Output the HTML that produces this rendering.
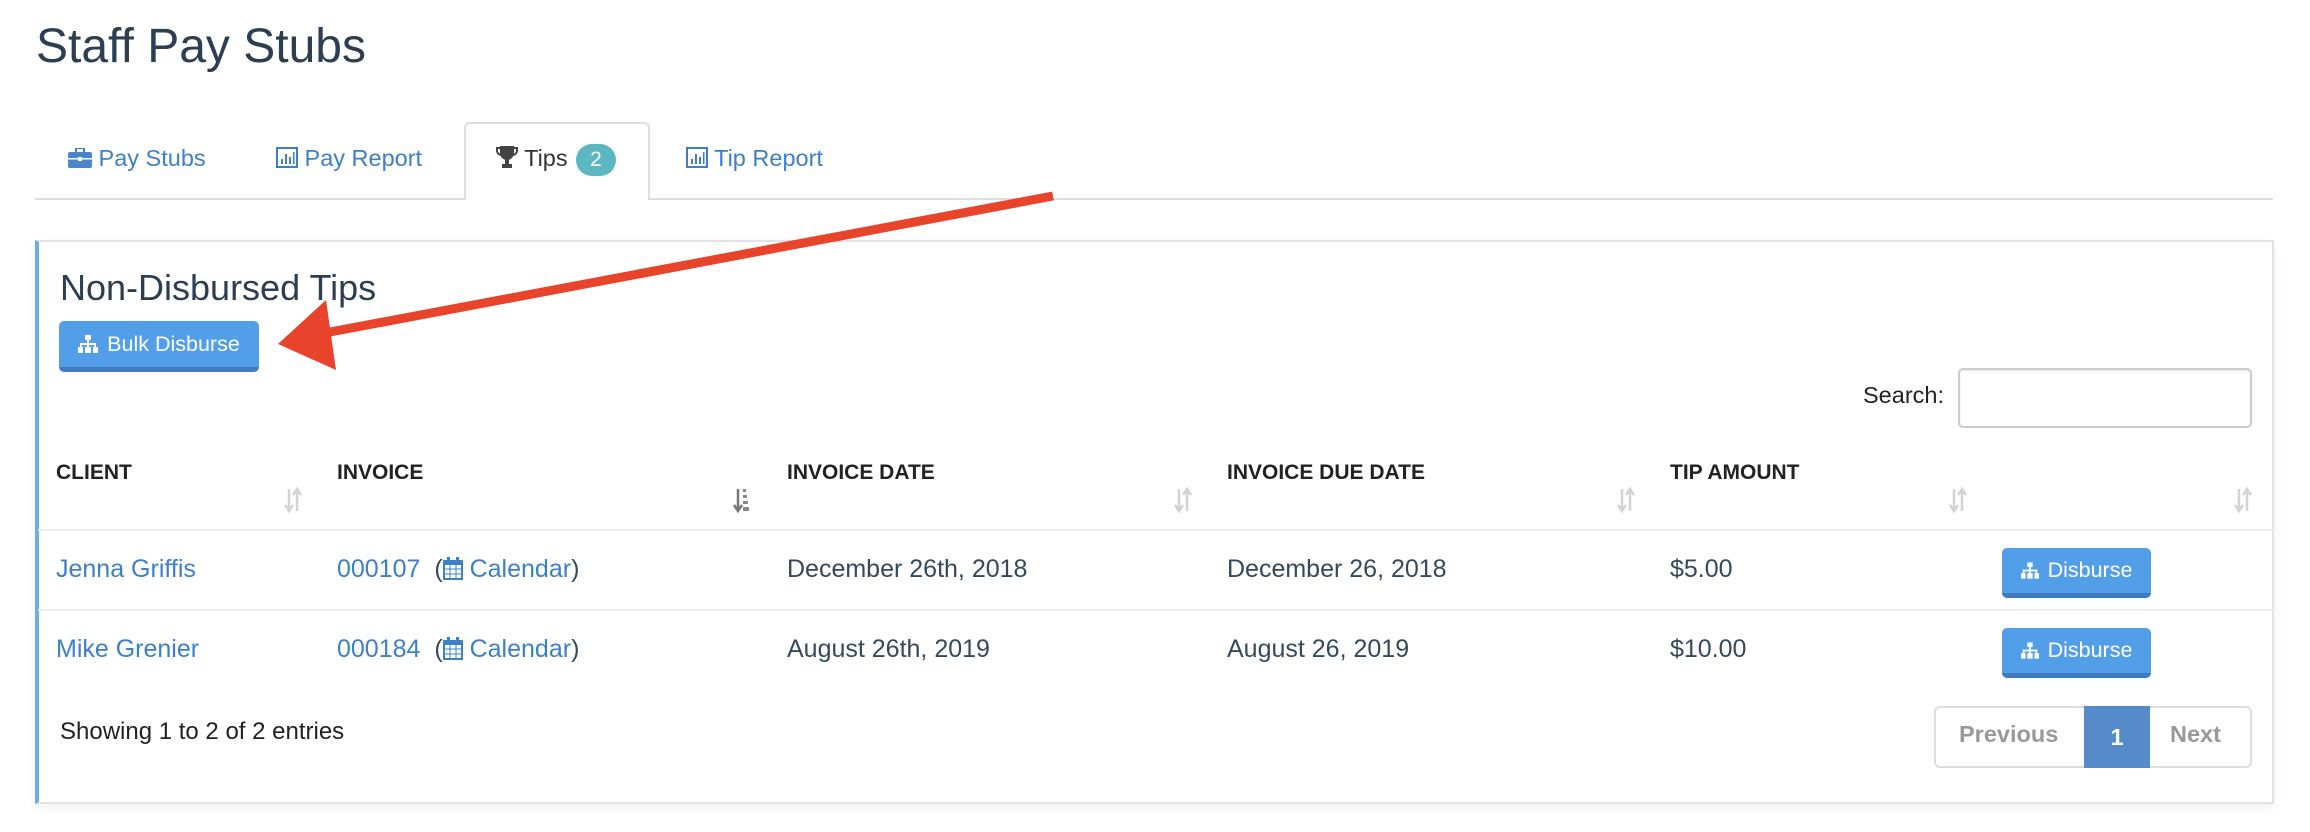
<!DOCTYPE html>
<html><head><meta charset="utf-8"><style>
*{box-sizing:border-box;margin:0;padding:0}
body{width:2310px;height:832px;background:#fff;font-family:"Liberation Sans",Arial,sans-serif;color:#34495e;position:relative;overflow:hidden}
.a{position:absolute;white-space:nowrap}
.link{color:#3d80c6}
.btn{position:absolute;background:#539ee8;border-radius:5px;border-bottom:5px solid #3f7bbd;color:#fff;font-size:21.5px;display:flex;align-items:center;justify-content:center;gap:9px}
.th{font-weight:bold;font-size:21px;color:#222;top:461px}
.td{font-size:25px;top:555px}
.td2{top:635px}
.sort{position:absolute;top:487px;width:18px;height:26px}
.line{position:absolute;left:38px;width:2235px;height:2px;background:#eef1f4}
</style></head><body>
<div class="a" style="left:36px;top:19px;font-size:48px;color:#2c3e50">Staff Pay Stubs</div>

<!-- tabs -->
<div class="a" style="left:35px;top:198px;width:2238px;height:2px;background:#ddd"></div>
<div class="a" style="left:464px;top:122px;width:186px;height:78px;border:2px solid #ddd;border-bottom:none;border-radius:6px 6px 0 0;background:#fff"></div>
<div class="a link" style="left:68px;top:145px;font-size:23.5px">
<svg width="24" height="20" viewBox="0 0 24 20" style="vertical-align:-2px"><rect x="8" y="0" width="8" height="5" rx="1" fill="none" stroke="#3d80c6" stroke-width="2"/><rect x="0" y="4" width="24" height="16" rx="2" fill="#4a86c8"/><rect x="0" y="10" width="24" height="1.5" fill="#fff"/><rect x="10" y="9" width="4" height="4" fill="#fff"/></svg> Pay Stubs</div>
<div class="a link" style="left:276px;top:145px;font-size:23.5px">
<svg width="22" height="21" viewBox="0 0 22 21" style="vertical-align:-2px"><rect x="1" y="1" width="20" height="19" fill="none" stroke="#3d80c6" stroke-width="2"/><rect x="5" y="12" width="2" height="5" fill="#3d80c6"/><rect x="9" y="7" width="2" height="10" fill="#3d80c6"/><rect x="13" y="10" width="2" height="7" fill="#3d80c6"/><rect x="17" y="5" width="1.5" height="12" fill="#3d80c6"/></svg> Pay Report</div>
<div class="a" style="left:496px;top:145px;font-size:23.5px;color:#333">
<svg width="22" height="24" viewBox="0 0 22 24" style="vertical-align:-3px"><path d="M4 1h14v7a7 7 0 0 1-14 0z" fill="#444"/><path d="M4 3H1v3a5 5 0 0 0 4 4M18 3h3v3a5 5 0 0 1-4 4" fill="none" stroke="#444" stroke-width="2"/><rect x="9" y="14" width="4" height="5" fill="#444"/><rect x="6" y="19" width="10" height="4" fill="#444"/></svg> Tips</div>
<div class="a" style="left:576px;top:144px;width:40px;height:32px;border-radius:16px;background:#5bb8c0;color:#fff;font-size:21px;text-align:center;line-height:32px">2</div>
<div class="a link" style="left:686px;top:145px;font-size:23.5px">
<svg width="22" height="21" viewBox="0 0 22 21" style="vertical-align:-2px"><rect x="1" y="1" width="20" height="19" fill="none" stroke="#3d80c6" stroke-width="2"/><rect x="5" y="12" width="2" height="5" fill="#3d80c6"/><rect x="9" y="7" width="2" height="10" fill="#3d80c6"/><rect x="13" y="10" width="2" height="7" fill="#3d80c6"/><rect x="17" y="5" width="1.5" height="12" fill="#3d80c6"/></svg> Tip Report</div>

<!-- panel -->
<div class="a" style="left:35px;top:240px;width:2239px;height:564px;border:2px solid #e2e2e2;border-left:4px solid #6aaee6;box-shadow:0 4px 10px rgba(0,0,0,.06)"></div>
<div class="a" style="left:60px;top:267px;font-size:36px;color:#2c3e50">Non-Disbursed Tips</div>
<div class="btn" style="left:59px;top:321px;width:200px;height:51px">
<svg width="20" height="18" viewBox="0 0 20 18"><rect x="7" y="0" width="6" height="5" fill="#fff"/><rect x="9" y="5" width="2" height="4" fill="#fff"/><rect x="2" y="8" width="16" height="2" fill="#fff"/><rect x="2" y="8" width="2" height="4" fill="#fff"/><rect x="16" y="8" width="2" height="4" fill="#fff"/><rect x="9" y="8" width="2" height="4" fill="#fff"/><rect x="0" y="12" width="5" height="6" fill="#fff"/><rect x="7" y="12" width="6" height="6" fill="#fff"/><rect x="15" y="12" width="5" height="6" fill="#fff"/></svg>Bulk Disburse</div>

<div class="a" style="left:1863px;top:382px;font-size:23.5px;color:#222">Search:</div>
<div class="a" style="left:1958px;top:368px;width:294px;height:60px;border:2px solid #ccc;border-radius:5px;box-shadow:inset 0 1px 2px rgba(0,0,0,.1)"></div>

<div class="a th" style="left:56px">CLIENT</div>
<div class="a th" style="left:337px">INVOICE</div>
<div class="a th" style="left:787px">INVOICE DATE</div>
<div class="a th" style="left:1227px">INVOICE DUE DATE</div>
<div class="a th" style="left:1670px">TIP AMOUNT</div>

<svg class="sort" style="left:284px" viewBox="0 0 18 26"><path d="M5 2v20M1 18l4 6 4-6M13 24V4M9 8l4-6 4 6" stroke="#d3d3d3" stroke-width="2.5" fill="none"/></svg>
<svg class="sort" style="left:733px" viewBox="0 0 18 26"><path d="M5 2v20M1 18l4 6 4-6" stroke="#777" stroke-width="2.5" fill="none"/><rect x="10" y="2" width="3" height="3" fill="#888"/><rect x="10" y="8" width="4" height="3" fill="#888"/><rect x="10" y="14" width="5" height="3" fill="#888"/><rect x="10" y="20" width="6" height="4" fill="#888"/></svg>
<svg class="sort" style="left:1174px" viewBox="0 0 18 26"><path d="M5 2v20M1 18l4 6 4-6M13 24V4M9 8l4-6 4 6" stroke="#d3d3d3" stroke-width="2.5" fill="none"/></svg>
<svg class="sort" style="left:1617px" viewBox="0 0 18 26"><path d="M5 2v20M1 18l4 6 4-6M13 24V4M9 8l4-6 4 6" stroke="#d3d3d3" stroke-width="2.5" fill="none"/></svg>
<svg class="sort" style="left:1949px" viewBox="0 0 18 26"><path d="M5 2v20M1 18l4 6 4-6M13 24V4M9 8l4-6 4 6" stroke="#d3d3d3" stroke-width="2.5" fill="none"/></svg>
<svg class="sort" style="left:2234px" viewBox="0 0 18 26"><path d="M5 2v20M1 18l4 6 4-6M13 24V4M9 8l4-6 4 6" stroke="#d3d3d3" stroke-width="2.5" fill="none"/></svg>

<div class="line" style="top:529px"></div>
<div class="line" style="top:609px"></div>

<div class="a td link" style="left:56px">Jenna Griffis</div>
<div class="a td" style="left:337px"><span class="link">000107</span>&nbsp; (<span class="link"><svg width="20" height="23" viewBox="0 0 20 23" style="vertical-align:-3px"><rect x="1" y="4" width="18" height="18" fill="none" stroke="#3d80c6" stroke-width="2"/><rect x="1" y="4" width="18" height="4" fill="#3d80c6"/><rect x="4" y="0" width="3" height="6" fill="#3d80c6"/><rect x="13" y="0" width="3" height="6" fill="#3d80c6"/><path d="M1 12h18M1 17h18M7 8v14M13 8v14" stroke="#3d80c6" stroke-width="1"/></svg> Calendar</span>)</div>
<div class="a td" style="left:787px">December 26th, 2018</div>
<div class="a td" style="left:1227px">December 26, 2018</div>
<div class="a td" style="left:1670px">$5.00</div>

<div class="a td td2 link" style="left:56px">Mike Grenier</div>
<div class="a td td2" style="left:337px"><span class="link">000184</span>&nbsp; (<span class="link"><svg width="20" height="23" viewBox="0 0 20 23" style="vertical-align:-3px"><rect x="1" y="4" width="18" height="18" fill="none" stroke="#3d80c6" stroke-width="2"/><rect x="1" y="4" width="18" height="4" fill="#3d80c6"/><rect x="4" y="0" width="3" height="6" fill="#3d80c6"/><rect x="13" y="0" width="3" height="6" fill="#3d80c6"/><path d="M1 12h18M1 17h18M7 8v14M13 8v14" stroke="#3d80c6" stroke-width="1"/></svg> Calendar</span>)</div>
<div class="a td td2" style="left:787px">August 26th, 2019</div>
<div class="a td td2" style="left:1227px">August 26, 2019</div>
<div class="a td td2" style="left:1670px">$10.00</div>

<div class="btn" style="left:2002px;top:548px;width:149px;height:50px"><svg width="18" height="17" viewBox="0 0 20 18"><rect x="7" y="0" width="6" height="5" fill="#fff"/><rect x="9" y="5" width="2" height="4" fill="#fff"/><rect x="2" y="8" width="16" height="2" fill="#fff"/><rect x="2" y="8" width="2" height="4" fill="#fff"/><rect x="16" y="8" width="2" height="4" fill="#fff"/><rect x="9" y="8" width="2" height="4" fill="#fff"/><rect x="0" y="12" width="5" height="6" fill="#fff"/><rect x="7" y="12" width="6" height="6" fill="#fff"/><rect x="15" y="12" width="5" height="6" fill="#fff"/></svg>Disburse</div>
<div class="btn" style="left:2002px;top:628px;width:149px;height:50px"><svg width="18" height="17" viewBox="0 0 20 18"><rect x="7" y="0" width="6" height="5" fill="#fff"/><rect x="9" y="5" width="2" height="4" fill="#fff"/><rect x="2" y="8" width="16" height="2" fill="#fff"/><rect x="2" y="8" width="2" height="4" fill="#fff"/><rect x="16" y="8" width="2" height="4" fill="#fff"/><rect x="9" y="8" width="2" height="4" fill="#fff"/><rect x="0" y="12" width="5" height="6" fill="#fff"/><rect x="7" y="12" width="6" height="6" fill="#fff"/><rect x="15" y="12" width="5" height="6" fill="#fff"/></svg>Disburse</div>

<div class="a" style="left:60px;top:718px;font-size:24px;color:#222">Showing 1 to 2 of 2 entries</div>

<div class="a" style="left:1934px;top:706px;width:318px;height:62px;border:2px solid #ddd;border-radius:6px"></div>
<div class="a" style="left:1959px;top:721px;font-size:23.5px;font-weight:bold;color:#999">Previous</div>
<div class="a" style="left:2084px;top:706px;width:66px;height:62px;background:#558acb;color:#fff;font-size:23.5px;font-weight:bold;text-align:center;line-height:62px">1</div>
<div class="a" style="left:2170px;top:721px;font-size:23.5px;font-weight:bold;color:#999">Next</div>

<!-- arrow -->
<svg class="a" style="left:0;top:0" width="2310" height="832"><line x1="1053" y1="196" x2="330" y2="332" stroke="#e8432b" stroke-width="9"/><polygon points="278,344 326,300 336,370" fill="#e8432b"/></svg>
</body></html>
